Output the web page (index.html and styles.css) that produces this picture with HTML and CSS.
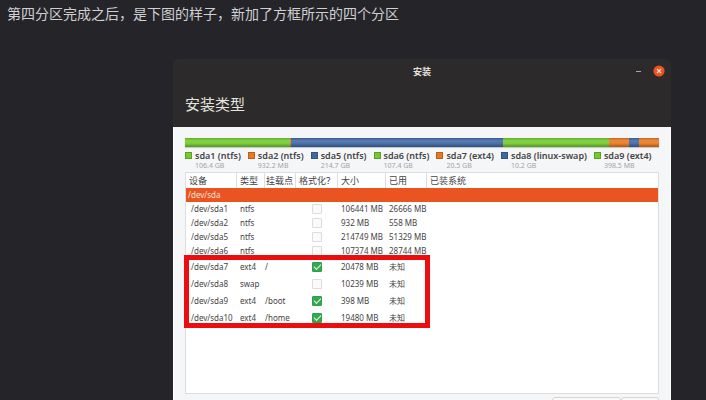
FILE: index.html
```html
<!DOCTYPE html>
<html lang="zh-CN">
<head>
<meta charset="utf-8">
<title>安装类型</title>
<link rel="stylesheet" href="styles.css">
</head>
<body>
<main class="article">
  <p class="caption">第四分区完成之后，是下图的样子，新加了方框所示的四个分区</p>
  <section class="window">
    <header class="header">
      <div class="titlebar">
        <span class="title">安装</span>
        <div class="controls">
          <button class="minimize" type="button" aria-label="最小化"></button>
          <button class="close" type="button" aria-label="关闭"><svg viewBox="0 0 12 12"><circle cx="6" cy="6" r="5.6" fill="#e95420"/><path d="M4 4l4 4M8 4l-4 4" stroke="#fbd9cc" stroke-width="1.2"/></svg></button>
        </div>
      </div>
      <h1>安装类型</h1>
    </header>
    <div class="content">
      <div class="usage">
        <span class="green" style="flex-grow:105"></span>
        <span class="orange" style="flex-grow:1"></span>
        <span class="blue" style="flex-grow:212"></span>
        <span class="green" style="flex-grow:106"></span>
        <span class="orange" style="flex-grow:20"></span>
        <span class="blue" style="flex-grow:10"></span>
        <span class="orange" style="flex-grow:20"></span>
      </div>
      <ul class="legend">
        <li><i class="green"></i><div><b>sda1 (ntfs)</b><small>106.4 GB</small></div></li>
        <li><i class="orange"></i><div><b>sda2 (ntfs)</b><small>932.2 MB</small></div></li>
        <li><i class="blue"></i><div><b>sda5 (ntfs)</b><small>214.7 GB</small></div></li>
        <li><i class="green"></i><div><b>sda6 (ntfs)</b><small>107.4 GB</small></div></li>
        <li><i class="orange"></i><div><b>sda7 (ext4)</b><small>20.5 GB</small></div></li>
        <li><i class="blue"></i><div><b>sda8 (linux-swap)</b><small>10.2 GB</small></div></li>
        <li><i class="green"></i><div><b>sda9 (ext4)</b><small>398.5 MB</small></div></li>
        <li><i class="orange"></i></li>
      </ul>
      <div class="list">
        <table>
          <colgroup><col class="c-device"><col class="c-type"><col class="c-mount"><col class="c-format"><col class="c-size"><col class="c-used"><col></colgroup>
          <thead>
            <tr><th>设备</th><th>类型</th><th>挂载点</th><th>格式化？</th><th>大小</th><th>已用</th><th>已装系统</th></tr>
          </thead>
          <tbody>
            <tr class="disk"><td colspan="7">/dev/sda</td></tr>
            <tr><td>/dev/sda1</td><td>ntfs</td><td></td><td><input type="checkbox" aria-label="格式化 /dev/sda1"></td><td>106441 MB</td><td>26666 MB</td><td></td></tr>
            <tr><td>/dev/sda2</td><td>ntfs</td><td></td><td><input type="checkbox" aria-label="格式化 /dev/sda2"></td><td>932 MB</td><td>558 MB</td><td></td></tr>
            <tr><td>/dev/sda5</td><td>ntfs</td><td></td><td><input type="checkbox" aria-label="格式化 /dev/sda5"></td><td>214749 MB</td><td>51329 MB</td><td></td></tr>
            <tr><td>/dev/sda6</td><td>ntfs</td><td></td><td><input type="checkbox" aria-label="格式化 /dev/sda6"></td><td>107374 MB</td><td>28744 MB</td><td></td></tr>
          </tbody>
          <tbody class="added">
            <tr><td>/dev/sda7</td><td>ext4</td><td>/</td><td><input type="checkbox" checked aria-label="格式化 /dev/sda7"></td><td>20478 MB</td><td>未知</td><td></td></tr>
            <tr><td>/dev/sda8</td><td>swap</td><td></td><td><input type="checkbox" aria-label="格式化 /dev/sda8"></td><td>10239 MB</td><td>未知</td><td></td></tr>
            <tr><td>/dev/sda9</td><td>ext4</td><td>/boot</td><td><input type="checkbox" checked aria-label="格式化 /dev/sda9"></td><td>398 MB</td><td>未知</td><td></td></tr>
            <tr><td>/dev/sda10</td><td>ext4</td><td>/home</td><td><input type="checkbox" checked aria-label="格式化 /dev/sda10"></td><td>19480 MB</td><td>未知</td><td></td></tr>
          </tbody>
        </table>
        <div class="highlight"></div>
      </div>
      <div class="actions">
        <button class="new-table" type="button" aria-label="新建分区表"></button>
        <button class="revert" type="button" aria-label="还原"></button>
      </div>
    </div>
  </section>
</main>
</body>
</html>
```
FILE: styles.css
```css
* { box-sizing: border-box; }

body {
  margin: 0;
  background: #252429;
  font-family: "Noto Sans", "Noto Sans CJK SC", sans-serif;
}

.article {
  height: 100vh;
  overflow: hidden;
  padding: 3px 35px 0 173px;
}

.caption {
  margin: 0 0 36px -166px;
  font-size: 14px;
  line-height: 20px;
  color: #d0d0d2;
  font-family: "Noto Sans CJK SC", sans-serif;
}

.window { color: #444; }

.header {
  height: 68px;
  border-radius: 5px 5px 0 0;
  background: #2c2a2a;
  color: #e4e2df;
}

.titlebar {
  display: grid;
  grid-template-columns: 1fr auto 1fr;
  align-items: center;
  height: 24px;
  padding: 0 6px;
}

.title {
  grid-column: 2;
  font-size: 9px;
  font-weight: 700;
}

.controls {
  display: flex;
  justify-content: flex-end;
  align-items: center;
  gap: 12px;
}

.controls button {
  padding: 0;
  border: 0;
  background: none;
}

.controls .minimize {
  width: 5px;
  height: 1px;
  background: #aaa7a3;
}

.close { height: 12px; }

.close svg {
  display: block;
  width: 12px;
  height: 12px;
}

h1 {
  margin: 0;
  padding: 10px 12px 0;
  font-size: 15px;
  line-height: 22px;
  font-weight: 400;
}

.content {
  padding: 11px 11px 20px;
  background: #f5f6f7;
  border-right: 1px solid #fff;
  border-left: 1px solid #fff;
}

.green { background: #73c92d; }
.orange { background: #e9781f; }
.blue { background: #3f68a5; }

.usage {
  display: flex;
  height: 9px;
  box-shadow: 0 1px 1px #c9cacb;
}

.usage span {
  flex-basis: 0;
  background-image: linear-gradient(#0002, #fff2 30%, #fff1 60%, #0004);
}

.legend {
  display: flex;
  gap: 7px;
  margin: 0;
  padding: 4px 0 0;
  height: 25px;
  overflow: hidden;
  list-style: none;
}

.legend li {
  display: flex;
  flex: none;
  gap: 3px;
}

.legend i {
  width: 7px;
  height: 7px;
  margin-top: 1px;
  border: 1px solid #0003;
}

.legend b,
.legend small {
  display: block;
  font-size: 9px;
  line-height: 10px;
  white-space: nowrap;
}

.legend b { font-weight: 600; }

.legend small {
  font-size: 7px;
  line-height: 9px;
  color: #a3a4a6;
}

.list {
  position: relative;
  height: 222px;
  border: 1px solid #dcdddf;
  background: #fff;
}

table {
  width: 100%;
  table-layout: fixed;
  border-collapse: separate;
  border-spacing: 0;
  font-size: 8px;
}

.c-device { width: 51px; }
.c-type { width: 28px; }
.c-mount { width: 31px; }
.c-format { width: 42px; }
.c-size { width: 48px; }
.c-used { width: 41px; }

th {
  height: 15px;
  padding: 0 0 0 3px;
  border-right: 1px solid #dcdddf;
  font-size: 9px;
  line-height: 14px;
  font-weight: 400;
  text-align: left;
  white-space: nowrap;
}

th:nth-child(3) { padding-left: 1px; }
th:last-child { border-right: 0; }

td {
  height: 14px;
  padding: 0 0 0 3px;
  line-height: 12px;
  white-space: nowrap;
}

td:first-child { padding-left: 5px; }

td:nth-child(3),
td:nth-child(4) { padding-left: 0; }

.disk td:first-child {
  padding-left: 2px;
  background: #e95420;
  color: #fbe3da;
}

.added td { height: 17px; }

input {
  appearance: none;
  display: block;
  width: 10px;
  height: 10px;
  margin: 0 auto;
  border: 1px solid #dddcdc;
  border-radius: 1px;
  background: #fafafa;
}

input:checked {
  display: grid;
  place-items: center;
  border-color: #2f9e48;
  background: #36a850;
}

input:checked::after {
  content: "";
  width: 6px;
  height: 3px;
  border: solid #e5f6e8;
  border-width: 0 0 1px 1px;
  transform: translateY(-1px) rotate(-45deg);
}

/* Frame around the newly added partitions */
.highlight {
  position: absolute;
  top: 82px;
  left: -2px;
  width: 246px;
  height: 73px;
  border: 5px solid #ed0c0e;
}

.actions {
  display: flex;
  justify-content: flex-end;
  padding-top: 3px;
}

.actions button {
  height: 20px;
  border: 1px solid #d5d5d6;
  border-radius: 3px;
  background: #fafafa;
}

.new-table { width: 69px; }
.revert { width: 38px; }
```
